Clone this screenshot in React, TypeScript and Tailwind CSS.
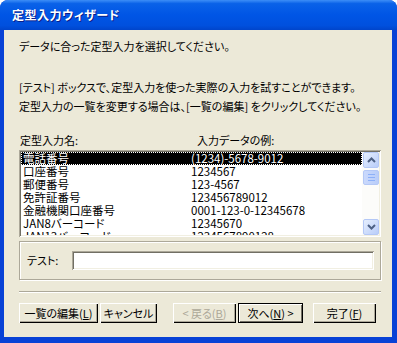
import React from "react";

const rows = [
  { name: "電話番号", sample: "(1234)-5678-9012" },
  { name: "口座番号", sample: "1234567" },
  { name: "郵便番号", sample: "123-4567" },
  { name: "免許証番号", sample: "123456789012" },
  { name: "金融機関口座番号", sample: "0001-123-0-12345678" },
  { name: "JAN8バーコード", sample: "12345670" },
  { name: "JAN13バーコード", sample: "1234567890128" },
];

const jp = "font-['Noto_Sans_CJK_JP',sans-serif] [font-feature-settings:'palt']";

function Button({
  children,
  disabled,
  primary,
  w,
}: {
  children: React.ReactNode;
  disabled?: boolean;
  primary?: boolean;
  w: string;
}) {
  return (
    <div
      className={`${w} h-[20px] flex items-center justify-center text-[11px] bg-[#ECE9D8] ${
        primary
          ? "border border-black shadow-[inset_1px_1px_#fff,inset_-1px_-1px_#716F64]"
          : "shadow-[inset_1px_1px_#fff,inset_-1px_-1px_#000,inset_-2px_-2px_#ACA899]"
      } ${disabled ? "text-[#ACA899]" : "text-black"}`}
    >
      {children}
    </div>
  );
}

function Arrow({ up }: { up?: boolean }) {
  return (
    <div className="w-[16px] h-[16px] rounded-[2px] bg-[linear-gradient(135deg,#E5EEFD,#B9CDF9)] border border-[#B4C8F6] flex items-center justify-center">
      <svg width="9" height="6" viewBox="0 0 9 6">
        <path
          d={up ? "M1 5 L4.5 1.5 L8 5" : "M1 1 L4.5 4.5 L8 1"}
          stroke="#4D6185"
          strokeWidth="2"
          fill="none"
        />
      </svg>
    </div>
  );
}

export default function App() {
  return (
    <div className={`w-[397px] h-[343px] bg-white ${jp}`}>
      <div className="w-full h-full flex flex-col rounded-t-[8px] bg-[#0842D6] overflow-hidden">
        <div className="h-[30px] shrink-0 flex items-center pl-[12px] bg-[linear-gradient(180deg,#3D8EF7_0%,#0A62E8_12%,#0055E5_50%,#0050DE_85%,#0045CB_100%)]">
          <span className="text-white text-[12px] font-bold [text-shadow:1px_1px_#0A1E8A] tracking-[0.5px]">
            定型入力ウィザード
          </span>
        </div>
        <div className="flex-1 ml-[4px] mr-[5px] mb-[6px] bg-[#ECE9D8] flex flex-col pl-[15px] pr-[11px] text-[11px] text-black leading-[13px]">
          <p className="mt-[10px]">データに合った定型入力を選択してください。</p>
          <p className="mt-[28px]">
            [テスト] ボックスで、定型入力を使った実際の入力を試すことができます。
          </p>
          <p className="mt-[6px]">
            定型入力の一覧を変更する場合は、[一覧の編集] をクリックしてください。
          </p>
          <div className="mt-[21px] flex">
            <span className="w-[178px] pl-[1px]">定型入力名:</span>
            <span>入力データの例:</span>
          </div>
          <div className="mt-[3px] h-[87px] shrink-0 flex bg-white shadow-[inset_1px_1px_#ACA899,inset_-1px_-1px_#fff,inset_2px_2px_#716F64,inset_-2px_-2px_#F1EFE2] p-[2px] overflow-hidden">
            <div className="flex-1 flex flex-col overflow-hidden">
              {rows.map((r, i) => (
                <div
                  key={r.name}
                  className={`h-[13px] shrink-0 flex items-center leading-[13px] text-[11.5px] ${
                    i === 0
                      ? "bg-black text-white outline-1 outline-dotted outline-white -outline-offset-1"
                      : ""
                  }`}
                >
                  <span className="w-[170px] pl-[2px]">{r.name}</span>
                  <span>{r.sample}</span>
                </div>
              ))}
            </div>
            <div className="w-[17px] flex flex-col bg-[#FCFCFA] pl-[1px]">
              <Arrow up />
              <div className="mt-[2px] w-[16px] h-[15px] rounded-[2px] bg-[linear-gradient(90deg,#CAD9FC,#B9CDF9)] border border-[#B4C8F6] flex flex-col items-center justify-center gap-[2px]">
                <div className="w-[7px] h-[1px] bg-[#8CB0F8]" />
                <div className="w-[7px] h-[1px] bg-[#8CB0F8]" />
                <div className="w-[7px] h-[1px] bg-[#8CB0F8]" />
              </div>
              <div className="flex-1" />
              <Arrow />
            </div>
          </div>
          <div className="mt-[4px] h-[39px] shrink-0 flex items-center border border-[#ACA899] shadow-[inset_1px_1px_#fff,1px_1px_#fff] pl-[7px] pr-[6px]">
            <span className="w-[45px]">テスト:</span>
            <div className="flex-1 h-[19px] bg-white shadow-[inset_1px_1px_#ACA899,inset_-1px_-1px_#fff,inset_2px_2px_#716F64,inset_-2px_-2px_#F1EFE2]" />
          </div>
          <div className="mt-[11px] h-[2px] shrink-0 border-t border-[#ACA899] border-b border-b-white" />
          <div className="mt-[10px] flex">
            <Button w="w-[79px]">
              一覧の編集(<span className="underline">L</span>)
            </Button>
            <div className="w-[2px]" />
            <Button w="w-[57px]">キャンセル</Button>
            <div className="w-[16px]" />
            <Button w="w-[63px]" disabled>
              &lt; 戻る(<span className="underline">B</span>)
            </Button>
            <div className="w-[2px]" />
            <Button w="w-[65px]" primary>
              次へ(<span className="underline">N</span>) &gt;
            </Button>
            <div className="w-[10px]" />
            <Button w="w-[63px]">
              完了(<span className="underline">F</span>)
            </Button>
          </div>
        </div>
      </div>
    </div>
  );
}
